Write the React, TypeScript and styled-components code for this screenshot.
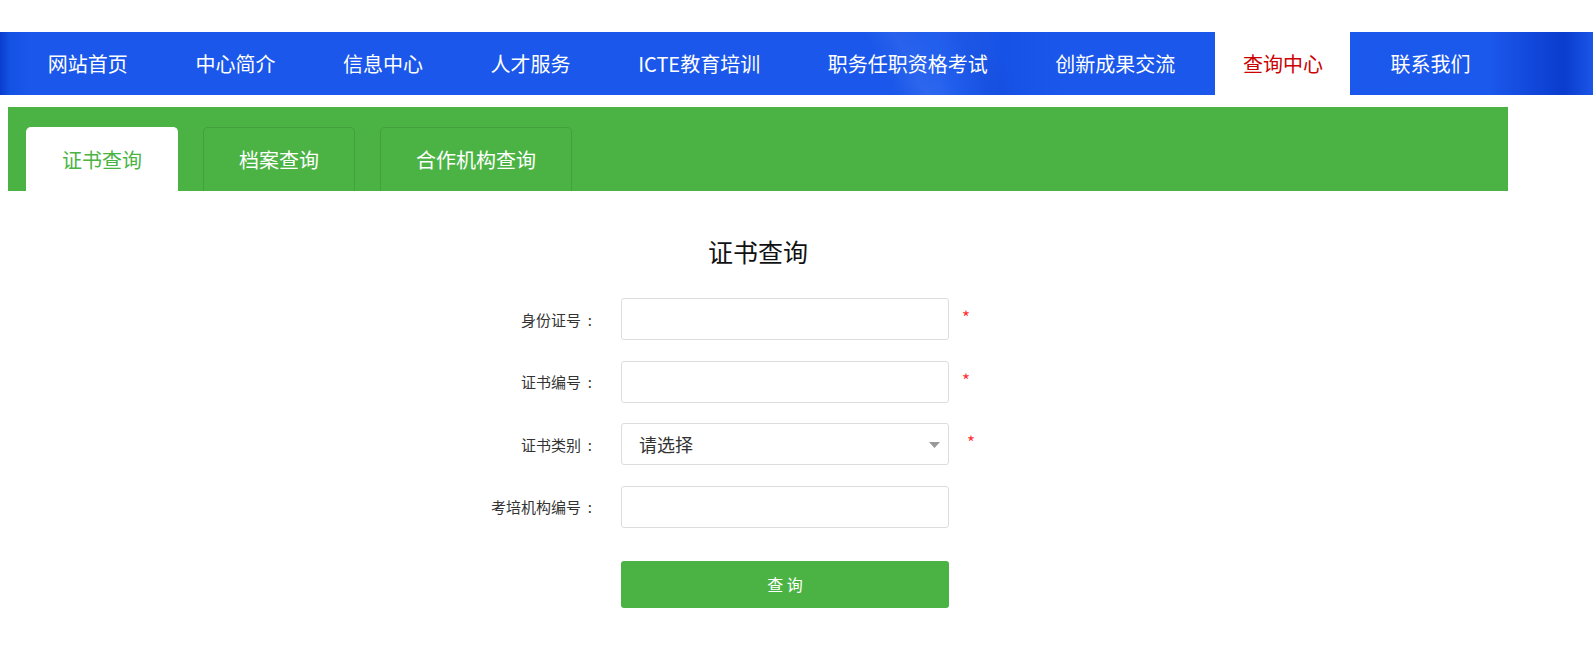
import React from "react";
import styled, { createGlobalStyle } from "styled-components";

const GlobalStyle = createGlobalStyle`
  html, body {
    margin: 0;
    padding: 0;
    background: #fff;
  }
  body {
    font-family: "Noto Sans CJK SC", "Noto Sans", sans-serif;
  }
`;

const navItems = [
  "网站首页",
  "中心简介",
  "信息中心",
  "人才服务",
  "ICTE教育培训",
  "职务任职资格考试",
  "创新成果交流",
  "查询中心",
  "联系我们",
];

const tabs = ["证书查询", "档案查询", "合作机构查询"];

const App = () => {
  return (
    <PageStyle>
      <GlobalStyle />
      <NavBar>
        {navItems.map((item) => (
          <NavItem key={item} $active={item === "查询中心"}>
            {item}
          </NavItem>
        ))}
      </NavBar>
      <Main>
        <TabBar>
          {tabs.map((t, i) => (
            <Tab key={t} $active={i === 0}>
              {t}
            </Tab>
          ))}
        </TabBar>
        <Title>证书查询</Title>
        <Form>
          <Row>
            <Label>
              身份证号<Colon>:</Colon>
            </Label>
            <Input type="text" />
            <Required>*</Required>
          </Row>
          <Row>
            <Label>
              证书编号<Colon>:</Colon>
            </Label>
            <Input type="text" />
            <Required>*</Required>
          </Row>
          <Row>
            <Label>
              证书类别<Colon>:</Colon>
            </Label>
            <SelectBox>
              <span>请选择</span>
              <svg width="11" height="6" viewBox="0 0 11 6">
                <path d="M0 0 L11 0 L5.5 6 Z" fill="#999" />
              </svg>
            </SelectBox>
            <Required $shift>*</Required>
          </Row>
          <Row>
            <Label>
              考培机构编号<Colon>:</Colon>
            </Label>
            <Input type="text" />
          </Row>
          <ButtonRow>
            <SubmitButton type="button">查 询</SubmitButton>
          </ButtonRow>
        </Form>
      </Main>
    </PageStyle>
  );
};

export default App;

const PageStyle = styled.div`
  padding-top: 32px;
  padding-bottom: 40px;
`;

const NavBar = styled.div`
  display: flex;
  height: 63px;
  padding-left: 14px;
  background: linear-gradient(
      62deg,
      transparent 0 55%,
      rgba(255, 255, 255, 0.06) 57%,
      transparent 59%,
      rgba(0, 20, 120, 0.06) 61%,
      transparent 63%
    ),
    linear-gradient(
      90deg,
      #0a3dcf 0px,
      #1452e4 10px,
      #1a57ea 30px,
      #1a57ea 56%,
      #2360ee 59%,
      #1652e6 63%,
      #1a57ea 67%,
      #1b58ec 93.5%,
      #0a3ccd 98.2%,
      #1a56e8 100%
    );
`;

const NavItem = styled.div<{ $active?: boolean }>`
  padding: 0 27.5px;
  margin: 0 6.3px;
  line-height: 63px;
  font-size: 20px;
  white-space: nowrap;
  color: ${(p) => (p.$active ? "#cc0000" : "#fff")};
  background: ${(p) => (p.$active ? "#fff" : "transparent")};
`;

const Main = styled.div`
  width: 1500px;
  margin: 12px 0 0 8px;
`;

const TabBar = styled.div`
  display: flex;
  align-items: flex-end;
  gap: 25px;
  height: 84px;
  padding-left: 18px;
  box-sizing: border-box;
  background: #4bb344;
`;

const Tab = styled.div<{ $active?: boolean }>`
  height: 64px;
  line-height: 64px;
  padding: 0 35px;
  font-size: 20px;
  border: 1px solid ${(p) => (p.$active ? "#fff" : "#43a13c")};
  border-bottom: none;
  border-radius: 5px 5px 0 0;
  box-sizing: border-box;
  color: ${(p) => (p.$active ? "#4bb344" : "#fff")};
  background: ${(p) => (p.$active ? "#fff" : "transparent")};
`;

const Title = styled.h2`
  margin: 0;
  padding-top: 42px;
  line-height: 36px;
  font-size: 25px;
  font-weight: normal;
  color: #111;
  text-align: center;
`;

const Form = styled.div`
  width: 632px;
  margin: 29px auto 0;
  display: flex;
  flex-direction: column;
  gap: 20.5px;
`;

const Row = styled.div`
  display: flex;
  align-items: center;
  height: 42px;
`;

const Label = styled.label`
  width: 150px;
  margin-right: 29px;
  text-align: right;
  font-size: 15px;
  color: #333;
  white-space: nowrap;
`;

const Colon = styled.span`
  display: inline-block;
  width: 11px;
  text-align: right;
`;

const Input = styled.input`
  width: 328px;
  height: 42px;
  box-sizing: border-box;
  border: 1px solid #dddddd;
  border-radius: 3px;
  outline: none;
  padding: 0 12px;
  font-size: 15px;
`;

const SelectBox = styled.div`
  width: 328px;
  height: 42px;
  box-sizing: border-box;
  border: 1px solid #dddddd;
  border-radius: 3px;
  display: flex;
  align-items: center;
  justify-content: space-between;
  padding: 0 8px 0 17px;
  font-size: 18px;
  color: #333;
  svg {
    margin-top: 2px;
  }
`;

const Required = styled.span<{ $shift?: boolean }>`
  margin-left: ${(p) => (p.$shift ? "18px" : "13px")};
  align-self: flex-start;
  margin-top: 6px;
  font-size: 17px;
  color: #f33;
`;

const ButtonRow = styled.div`
  padding-left: 179px;
  margin-top: 12.5px;
`;

const SubmitButton = styled.button`
  width: 328px;
  height: 47px;
  border: none;
  border-radius: 3px;
  background: #4bb344;
  color: #fff;
  font-family: "Noto Sans CJK SC", sans-serif;
  font-size: 16px;
  cursor: pointer;
`;
